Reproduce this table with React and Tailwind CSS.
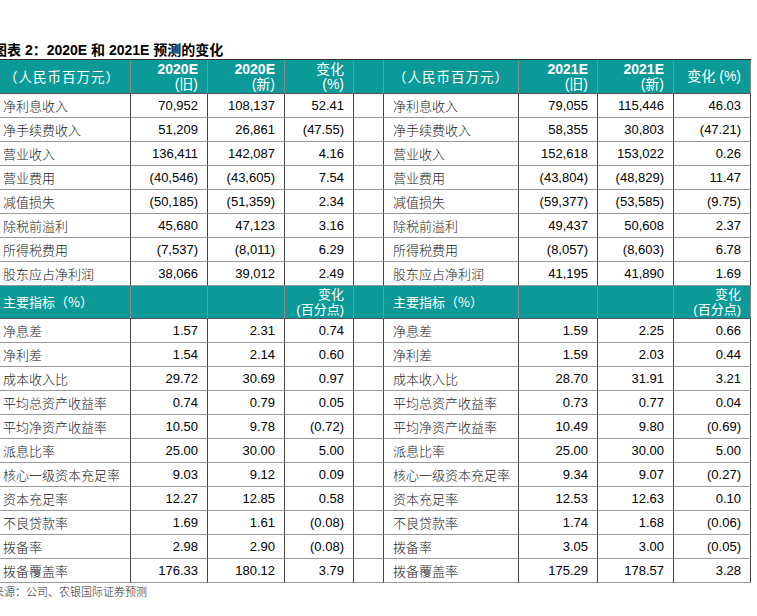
import React from 'react';

const top = [
  ['净利息收入', '70,952', '108,137', '52.41', '79,055', '115,446', '46.03'],
  ['净手续费收入', '51,209', '26,861', '(47.55)', '58,355', '30,803', '(47.21)'],
  ['营业收入', '136,411', '142,087', '4.16', '152,618', '153,022', '0.26'],
  ['营业费用', '(40,546)', '(43,605)', '7.54', '(43,804)', '(48,829)', '11.47'],
  ['减值损失', '(50,185)', '(51,359)', '2.34', '(59,377)', '(53,585)', '(9.75)'],
  ['除税前溢利', '45,680', '47,123', '3.16', '49,437', '50,608', '2.37'],
  ['所得税费用', '(7,537)', '(8,011)', '6.29', '(8,057)', '(8,603)', '6.78'],
  ['股东应占净利润', '38,066', '39,012', '2.49', '41,195', '41,890', '1.69'],
];

const ratios = [
  ['净息差', '1.57', '2.31', '0.74', '1.59', '2.25', '0.66'],
  ['净利差', '1.54', '2.14', '0.60', '1.59', '2.03', '0.44'],
  ['成本收入比', '29.72', '30.69', '0.97', '28.70', '31.91', '3.21'],
  ['平均总资产收益率', '0.74', '0.79', '0.05', '0.73', '0.77', '0.04'],
  ['平均净资产收益率', '10.50', '9.78', '(0.72)', '10.49', '9.80', '(0.69)'],
  ['派息比率', '25.00', '30.00', '5.00', '25.00', '30.00', '5.00'],
  ['核心一级资本充足率', '9.03', '9.12', '0.09', '9.34', '9.07', '(0.27)'],
  ['资本充足率', '12.27', '12.85', '0.58', '12.53', '12.63', '0.10'],
  ['不良贷款率', '1.69', '1.61', '(0.08)', '1.74', '1.68', '(0.06)'],
  ['拨备率', '2.98', '2.90', '(0.08)', '3.05', '3.00', '(0.05)'],
  ['拨备覆盖率', '176.33', '180.12', '3.79', '175.29', '178.57', '3.28'],
];

const sans = "font-['Liberation_Sans','Noto_Sans_CJK_SC',sans-serif]";
const cjk = "font-['Noto_Sans_CJK_SC',sans-serif]";

// body cells
const lab = `h-[24px] p-0 pl-[9px] text-left text-[13px] font-light text-[#222] border-b border-r border-b-[#999] border-r-[#444] ${cjk}`;
const num = `h-[24px] p-0 pr-[9px] text-right text-[13px] text-black border-b border-r border-b-[#999] border-r-[#444] ${sans}`;
const gap = 'h-[24px] p-0 border-b border-r border-b-[#999] border-r-[#444]';

// teal header cells
const th = 'p-0 bg-[#0b9a98] text-white font-normal border-b border-r border-b-[#555] border-r-[#8a8a8a]';

const YearHead = ({ year, tag }) => (
  <th className={`${th} pr-[9px] text-right text-[14px] leading-[15px] ${sans}`}>
    <div className="font-bold">{year}</div>
    <div>({tag})</div>
  </th>
);

const Row = ({ r }) => (
  <tr>
    <td className={lab}>{r[0]}</td>
    <td className={num}>{r[1]}</td>
    <td className={num}>{r[2]}</td>
    <td className={num}>{r[3]}</td>
    <td className={gap}></td>
    <td className={lab}>{r[0]}</td>
    <td className={num}>{r[4]}</td>
    <td className={num}>{r[5]}</td>
    <td className={num}>{r[6]}</td>
  </tr>
);

export default function App() {
  return (
    <div className="w-[757px] h-[616px] overflow-hidden bg-white">
      <div className="ml-[-7px] w-[764px] pt-[41px]">
        <div className={`h-[18px] text-[14px] leading-[18px] font-bold text-black ${sans}`}>
          图表 2：2020E 和 2021E 预测的变化
        </div>
        <table className="table-fixed border-separate border-spacing-0 w-[757px] border-t border-l border-t-[#333] border-l-[#444]">
          <colgroup>
            <col className="w-[137px]" />
            <col className="w-[77px]" />
            <col className="w-[77px]" />
            <col className="w-[69px]" />
            <col className="w-[30px]" />
            <col className="w-[135px]" />
            <col className="w-[79px]" />
            <col className="w-[76px]" />
            <col className="w-[77px]" />
          </colgroup>
          <thead>
            <tr className="h-[34px]">
              <th className={`${th} text-center text-[13.5px] tracking-[1px] ${cjk}`}>（人民币百万元）</th>
              <YearHead year="2020E" tag="旧" />
              <YearHead year="2020E" tag="新" />
              <th className={`${th} pr-[9px] text-right text-[14px] leading-[15px] ${sans}`}>
                <div>变化</div>
                <div>(%)</div>
              </th>
              <th className={th}></th>
              <th className={`${th} text-center text-[13.5px] tracking-[1px] ${cjk}`}>（人民币百万元）</th>
              <YearHead year="2021E" tag="旧" />
              <YearHead year="2021E" tag="新" />
              <th className={`${th} pr-[9px] text-right text-[14px] ${sans}`}>变化 (%)</th>
            </tr>
          </thead>
          <tbody>
            {top.map((r) => (
              <Row key={r[0]} r={r} />
            ))}
            <tr className="h-[33px]">
              <td className={`${th} pl-[9px] text-left text-[13px] font-medium ${cjk}`}>主要指标（%）</td>
              <td className={th}></td>
              <td className={th}></td>
              <td className={`${th} pr-[9px] text-right text-[13px] leading-[15px] ${sans}`}>
                <div>变化</div>
                <div>(百分点)</div>
              </td>
              <td className={th}></td>
              <td className={`${th} pl-[9px] text-left text-[13px] font-medium ${cjk}`}>主要指标（%）</td>
              <td className={th}></td>
              <td className={th}></td>
              <td className={`${th} pr-[9px] text-right text-[13px] leading-[15px] ${sans}`}>
                <div>变化</div>
                <div>(百分点)</div>
              </td>
            </tr>
            {ratios.map((r) => (
              <Row key={r[0]} r={r} />
            ))}
          </tbody>
        </table>
        <div className={`pt-[1px] text-[11px] leading-[14px] font-light text-[#222] ${cjk}`}>
          来源：公司、农银国际证券预测
        </div>
      </div>
    </div>
  );
}
